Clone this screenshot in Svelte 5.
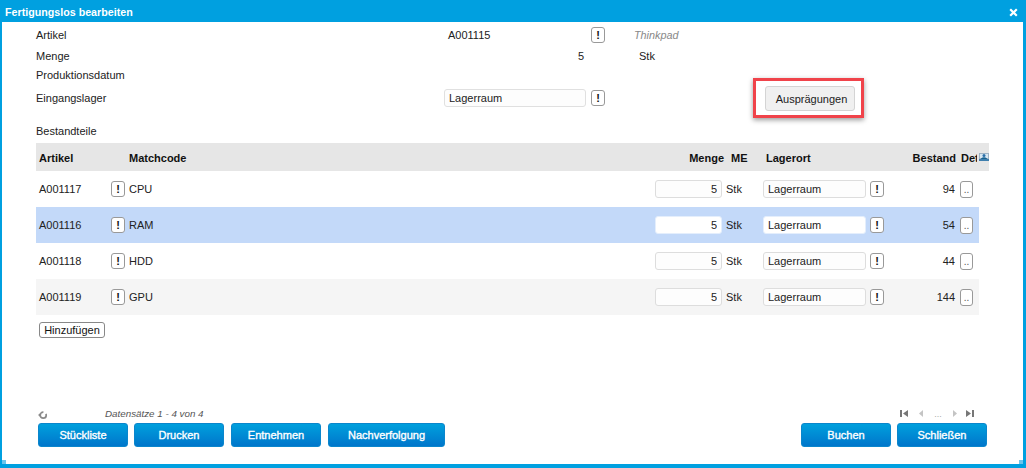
<script>
  const rows = [
    { id: 'A001117', name: 'CPU', stock: 94, cls: '' },
    { id: 'A001116', name: 'RAM', stock: 54, cls: 'selected' },
    { id: 'A001118', name: 'HDD', stock: 44, cls: '' },
    { id: 'A001119', name: 'GPU', stock: 144, cls: 'alt' }
  ];
</script>

<div class="window">
  <header class="title">
    <span>Fertigungslos bearbeiten</span>
    <svg class="close" width="9" height="9" viewBox="0 0 9 9" aria-hidden="true"><path d="M1.2 1.2l6.6 6.6M7.8 1.2L1.2 7.8" stroke="#fff" stroke-width="2.2"/></svg>
  </header>

  <main class="body">
    <section class="form">
      <div class="frow r1">
        <span class="lbl">Artikel</span>
        <span class="artno">A001115</span>
        <button class="ex">!</button>
        <em class="desc">Thinkpad</em>
      </div>
      <div class="frow r2">
        <span class="lbl">Menge</span>
        <span class="qty">5</span>
        <span class="unit">Stk</span>
      </div>
      <div class="frow r3"><span class="lbl">Produktionsdatum</span></div>
      <div class="frow r4">
        <span class="lbl">Eingangslager</span>
        <input class="store" value="Lagerraum" />
        <button class="ex">!</button>
        <div class="mark"><button class="variants">Ausprägungen</button></div>
      </div>
    </section>

    <div class="section">Bestandteile</div>

    <div class="thead">
      <span>Artikel</span>
      <span></span>
      <span>Matchcode</span>
      <span class="right">Menge</span>
      <span class="me">ME</span>
      <span class="ort">Lagerort</span>
      <span></span>
      <span class="right">Bestand</span>
      <span class="det">Det</span>
      <svg class="detimg" width="10" height="8" viewBox="0 0 10 8" aria-hidden="true">
        <rect width="10" height="6" fill="#9db2c4"/><rect x="1" y="1" width="8" height="4" fill="#d6e6f2"/>
        <circle cx="5" cy="2.600" r="1.500" fill="#2b6fa8"/><path d="M2 7V5.500Q5 3 8 5.500V7Z" fill="#14608f"/><rect y="6" width="10" height="2" fill="#3f7fae"/>
      </svg>
    </div>
    {#each rows as r}
      <div class="trow {r.cls}">
        <span class="cid">{r.id}</span>
        <button class="ex">!</button>
        <span class="cname">{r.name}</span>
        <input class="cqty" value="5" />
        <span class="cunit">Stk</span>
        <input class="cstore" value="Lagerraum" />
        <button class="ex">!</button>
        <span class="cstock">{r.stock}</span>
        <button class="dots">..</button>
      </div>
    {/each}

    <button class="add">Hinzufügen</button>

    <footer class="foot">
      <div class="status">
        <svg class="refresh" width="10" height="10" viewBox="0 0 10 10" aria-hidden="true">
          <circle cx="5.200" cy="5.200" r="3" fill="none" stroke="#8a8a8a" stroke-width="1.700" stroke-dasharray="14 3"/><path d="M0 5l2.500-2v4z" fill="#8a8a8a"/>
        </svg>
        <em class="count">Datensätze 1 - 4 von 4</em>
        <div class="pager">
          <svg class="first" width="9" height="7" viewBox="0 0 9 7" aria-hidden="true"><path d="M0 0h2v7H0zM8 0v7L3 3.500z" fill="#777"/></svg>
          <svg width="5" height="7" viewBox="0 0 5 7" aria-hidden="true"><path d="M5 0v7L1 3.500z" fill="#c4c4c4"/></svg>
          <span>...</span>
          <svg width="5" height="7" viewBox="0 0 5 7" aria-hidden="true"><path d="M0 0v7l4-3.500z" fill="#c4c4c4"/></svg>
          <svg width="9" height="7" viewBox="0 0 9 7" aria-hidden="true"><path d="M0 0v7l5-3.500zM6 0h2v7H6z" fill="#777"/></svg>
        </div>
      </div>
      <div class="actions">
        <button class="pri">Stückliste</button>
        <button class="pri">Drucken</button>
        <button class="pri">Entnehmen</button>
        <button class="pri wide">Nachverfolgung</button>
        <button class="pri push">Buchen</button>
        <button class="pri">Schließen</button>
      </div>
    </footer>
    <i class="grip left"></i>
    <i class="grip rightg"></i>
  </main>
</div>

<style>
  :global(body) { margin: 0; background: #fff; }
  .window {
    width: 1026px; height: 468px; box-sizing: border-box;
    display: flex; flex-direction: column;
    border: solid #00a0e0; border-width: 0 3px 4px 2px;
    font: 11px "Liberation Sans", Arial, sans-serif; color: #222;
  }
  .title {
    height: 22px; box-sizing: border-box; margin: 0 -3px 0 -2px; padding: 1px 8px 0 5px; background: #00a0e0;
    display: flex; align-items: center; justify-content: space-between; flex: none;
    color: #fff; font-weight: bold; font-size: 10.7px;
  }
  .close { margin-top: 1px; }
  .body { flex: 1; display: flex; flex-direction: column; padding-left: 34px; position: relative; min-height: 0; }
  .grip { position: absolute; bottom: 0; width: 4px; height: 4px; background: #6cc5ec; }
  .grip.left { left: 0; }
  .grip.rightg { right: 0; }
  .form { padding-top: 3px; }
  .frow { display: flex; align-items: center; height: 21px; }
  .frow.r1 { height: 20px; }
  .frow.r3 { height: 18px; }
  .frow.r4 { height: 27px; }
  .lbl { width: 408px; flex: none; }
  .artno { width: 141px; margin-left: 4px; }
  .ex {
    width: 14px; height: 16px; padding: 0; box-sizing: border-box; flex: none;
    border: 1px solid #999; border-radius: 3px; background: #fff; color: #111;
    font: bold 11px "Liberation Sans", Arial, sans-serif; line-height: 14px;
  }
  .r1 .ex { margin-left: 2px; }
  .desc { margin-left: 29px; color: #888; font-size: 10.8px; }
  .qty { margin-left: 134px; width: 6px; }
  .unit { margin-left: 55px; }
  input {
    box-sizing: border-box; height: 18px; padding: 0 4px; margin: 0;
    border: 1px solid #e0e0e0; border-radius: 3px; background: #fdfdfd;
    font: 11px "Liberation Sans", Arial, sans-serif; color: #222; outline: none;
  }
  .store { width: 142px; margin-right: 5px; }
  .mark {
    margin-left: 148px; margin-top: 1px; padding: 5px 6px 4px 9px; flex: none;
    border: 3px solid #f0434a; box-shadow: 0 2px 5px rgba(0,0,0,.4);
    display: flex;
  }
  .variants {
    width: 90px; height: 25px; padding: 0 0 0 3px; box-sizing: border-box; border: 1px solid #d4d4d4; border-radius: 3px;
    background: #f0f0f0; color: #222; font: 11px "Liberation Sans", Arial, sans-serif;
  }
  .section { margin-top: 12px; height: 17px; line-height: 17px; }
  .thead, .trow {
    display: grid; align-items: center;
    padding-left: 3px; box-sizing: border-box;
  }
  .trow { grid-template-columns: 72px 14px 530px 67px 41px 103px 18px 71px 24px; }
  .thead {
    height: 28px; padding-top: 2px; background: #e6e6e6; font-weight: bold; width: 953px; color: #111;
    position: relative;
    margin-top: 3px;
    grid-template-columns: 90px 0 525px 70px 35px 80px 60px 57px 23px;
  }
  .right { text-align: right; }
  .me { padding-left: 7px; }
  .ort { padding-left: 7px; }
  .det { padding-left: 5px; overflow: hidden; white-space: nowrap; width: 16px; }
  .detimg { position: absolute; right: 0; top: 10px; }
  .trow { height: 36px; width: 943px; }
  .trow.selected { background: #c3d9f9; }
  .trow.alt { background: #f5f5f5; }
  .cname { padding-left: 4px; }
  .cqty { width: 67px; text-align: right; }
  .cunit { padding-left: 4px; }
  .cstore { width: 103px; }
  .cstock { text-align: right; }
  .dots {
    margin-left: 5px; width: 13px; height: 17px; padding: 0; box-sizing: border-box;
    border: 1px solid #999; border-radius: 3px; background: #fff; color: #555;
    font: 10px "Liberation Sans", Arial, sans-serif;
  }
  .trow .cqty, .trow .cstore { border-color: #ddd; }
  .trow.selected .cqty, .trow.selected .cstore { border-color: #e4eefc; background: #fff; }
  .trow > .cstore + .ex { margin-left: 4px; }
  .add {
    align-self: flex-start; margin: 7px 0 0 3px; width: 66px; height: 16px; padding: 0;
    border: 1px solid #888; border-radius: 3px; background: #fff; color: #111;
    font: 11px "Liberation Sans", Arial, sans-serif;
  }
  .foot { margin-top: auto; padding: 0 36px 17px 4px; margin-left: -2px; }
  .status { display: flex; align-items: center; height: 13px; margin-bottom: 3px; }
  .refresh { flex: none; margin-top: 3px; }
  .count { margin-left: 57px; color: #555; font-size: 9.8px; }
  .pager { margin-left: auto; margin-right: 12px; display: flex; align-items: center; gap: 8px; color: #aaa; font-size: 9px; }
  .pager .first { margin-right: 1px; }
  .pager span { width: 14px; text-align: center; }
  .actions { display: flex; gap: 6px; }
  .pri {
    width: 90px; height: 24px; padding: 0; flex: none;
    border: 1px solid #0b86cc; border-radius: 3px; color: #fff;
    background: linear-gradient(#00a0dd, #0076cb);
    font: 11px "Liberation Sans", Arial, sans-serif; -webkit-text-stroke: 0.35px #fff;
  }
  .wide { width: 117px; margin-left: 1px; }
  .actions .pri:nth-child(3) { margin-left: 1px; }
  .push { margin-left: auto; }
</style>
